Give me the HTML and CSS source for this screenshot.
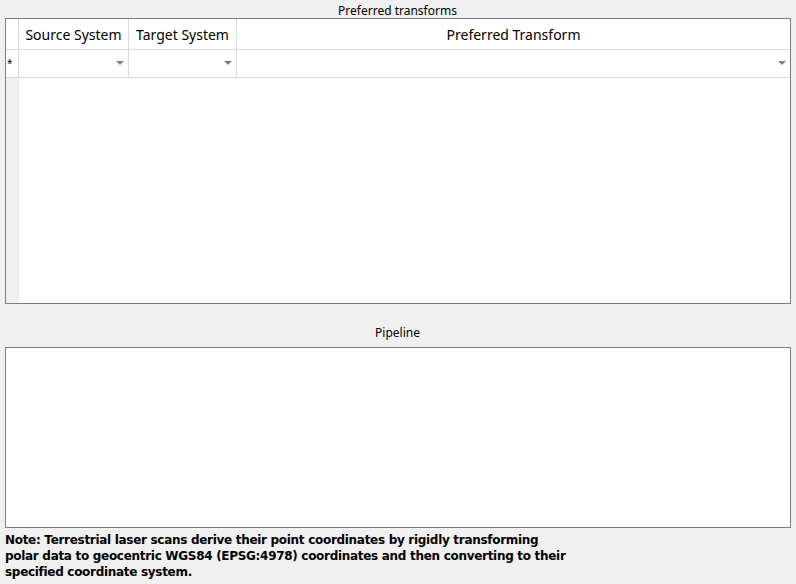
FILE: index.html
```html
<!DOCTYPE html>
<html>
<head>
<meta charset="utf-8">
<link rel="stylesheet" href="styles.css">
</head>
<body>
<div class="page">
  <div class="group-title">Preferred transforms</div>
  <div class="table-frame">
    <div class="grid">
      <div class="corner"></div>
      <div class="hcell">Source System</div>
      <div class="hcell">Target System</div>
      <div class="hcell last">Preferred Transform</div>

      <div class="rowhead">*</div>
      <div class="cell"><span class="arrow"></span></div>
      <div class="cell"><span class="arrow"></span></div>
      <div class="cell last"><span class="arrow"></span></div>
    </div>
    <div class="empty">
      <div class="empty-head"></div>
      <div class="empty-body"></div>
    </div>
  </div>
  <div class="pipeline-title">Pipeline</div>
  <div class="pipeline-box"></div>
  <div class="note">Note: Terrestrial laser scans derive their point coordinates by rigidly transforming<br>polar data to geocentric WGS84 (EPSG:4978) coordinates and then converting to their<br>specified coordinate system.</div>
</div>
</body>
</html>
```

FILE: styles.css
```css
html, body {
  margin: 0;
  padding: 0;
  background: #f0f0f0;
}
body {
  width: 796px;
  height: 584px;
  overflow: hidden;
  font-family: "Noto Sans", "Open Sans", sans-serif;
  color: #000;
}
.page {
  padding: 0 5px 0 5px;
  display: flex;
  flex-direction: column;
}
.group-title {
  height: 18px;
  line-height: 22px;
  font-size: 12px;
  text-align: center;
  margin-right: 1px;
}
.table-frame {
  width: 784px;
  height: 284px;
  border: 1px solid #7e7e7e;
  background: #fff;
  display: flex;
  flex-direction: column;
}
.grid {
  display: grid;
  grid-template-columns: 13px 110px 108px 1fr;
  grid-template-rows: 31px 28px;
}
.corner, .hcell, .rowhead, .cell {
  border-right: 1px solid #d9d9d9;
  border-bottom: 1px solid #d9d9d9;
  box-sizing: border-box;
  background: #fff;
}
.last {
  border-right: none;
}
.hcell {
  font-size: 14px;
  display: flex;
  align-items: center;
  justify-content: center;
  padding-top: 1px;
}
.rowhead {
  font-size: 10px;
  line-height: 1;
  padding: 8px 0 0 1px;
}
.cell {
  position: relative;
}
.arrow {
  position: absolute;
  right: 4px;
  top: 11px;
  width: 0;
  height: 0;
  border-left: 4px solid transparent;
  border-right: 4px solid transparent;
  border-top: 4px solid #7f7f7f;
}
.empty {
  flex: 1;
  display: flex;
}
.empty-head {
  width: 13px;
  background: #f0f0f0;
}
.empty-body {
  flex: 1;
  background: #fff;
}
.pipeline-title {
  height: 43px;
  box-sizing: border-box;
  padding-top: 20px;
  line-height: 18px;
  font-size: 12px;
  text-align: center;
  margin-right: 1px;
}
.pipeline-box {
  width: 784px;
  height: 179px;
  border: 1px solid #7e7e7e;
  background: #fff;
}
.note {
  margin-top: 4px;
  font-family: "DejaVu Sans", sans-serif;
  font-weight: bold;
  font-size: 12px;
  line-height: 16px;
  letter-spacing: -0.3px;
}
```
